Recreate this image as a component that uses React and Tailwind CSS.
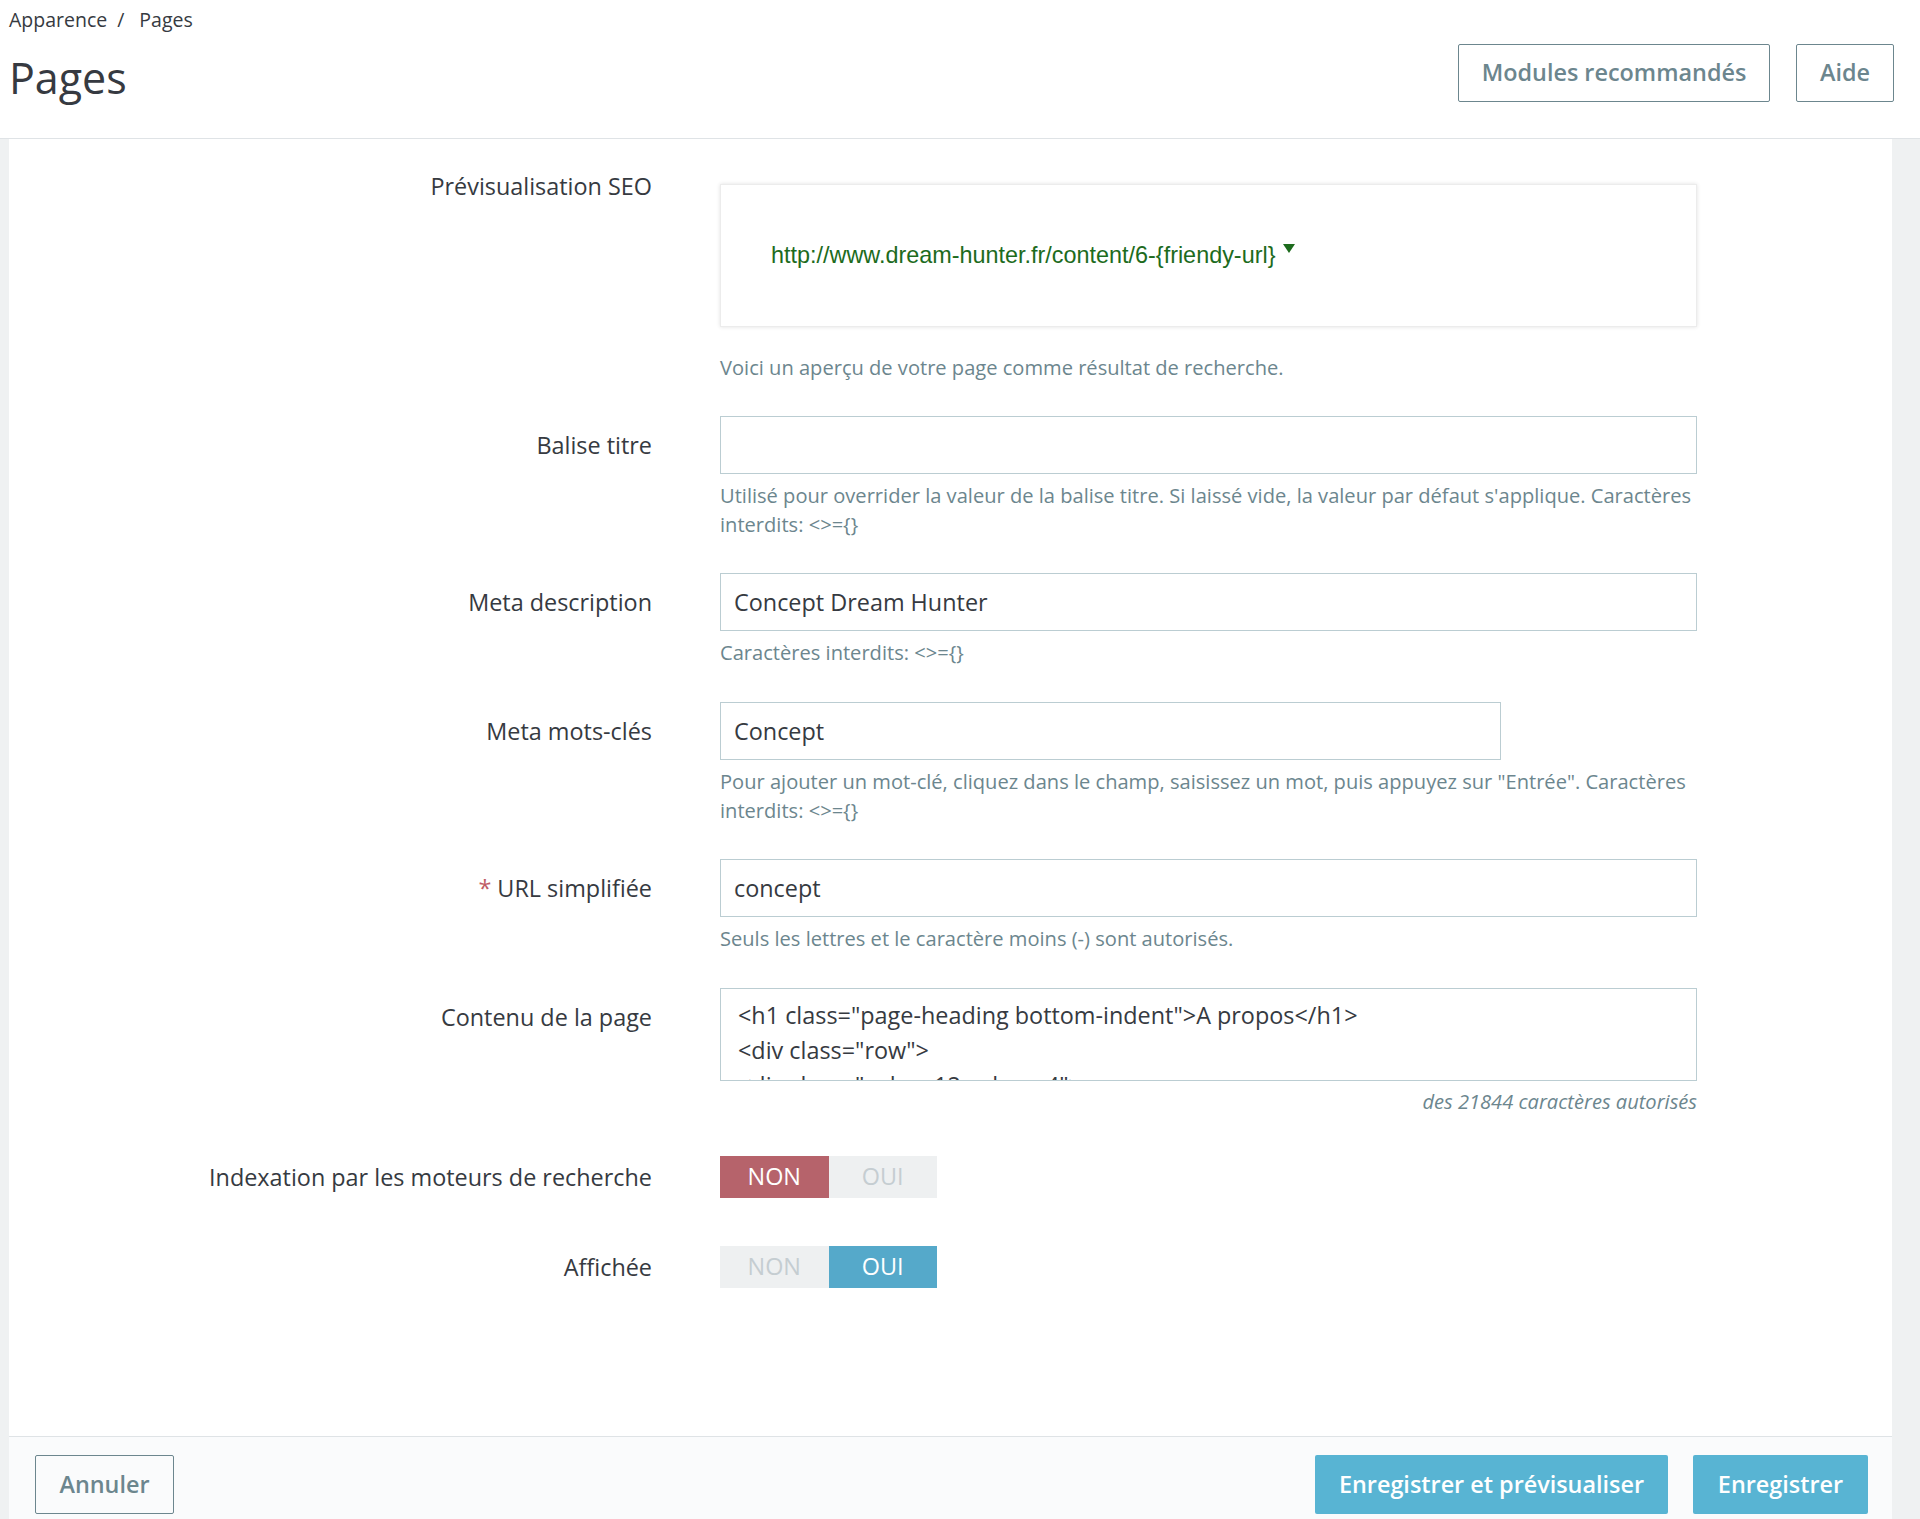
import { useState } from "react"

const Help = ({ children, className = "" }) => (
  <p className={`mt-[7px] text-[20.1px] leading-[29px] text-[#6c868e] ${className}`}>{children}</p>
)

const Row = ({ label, required, children, className = "mb-[34.5px]", labelClass = "leading-[58px]" }) => (
  <div className={`flex ${className}`}>
    <div className={`w-[643px] shrink-0 text-right text-[23.4px] text-[#363a41] ${labelClass}`}>
      {required && <span className="text-[#c05c67] mr-[6px]">*</span>}
      {label}
    </div>
    <div className="ml-[68px] w-[977px]">{children}</div>
  </div>
)

const Toggle = ({ value, onChange }) => (
  <div className="flex h-[58px] items-center">
    <div className="flex h-[42px] w-[217px] text-[23.4px] uppercase">
      <button
        onClick={() => onChange(false)}
        className={`flex-1 flex items-center justify-center ${
          !value ? "bg-[#b6636b] text-white" : "bg-[#eef0f1] text-[#c5cdd1]"
        }`}
      >
        NON
      </button>
      <button
        onClick={() => onChange(true)}
        className={`flex-1 flex items-center justify-center ${
          value ? "bg-[#55a9ca] text-white" : "bg-[#eef0f1] text-[#c5cdd1]"
        }`}
      >
        OUI
      </button>
    </div>
  </div>
)

const App = () => {
  const [indexation, setIndexation] = useState(false)
  const [visible, setVisible] = useState(true)
  const [title, setTitle] = useState("")
  const [description, setDescription] = useState("Concept Dream Hunter")
  const [keywords, setKeywords] = useState("Concept")
  const [slug, setSlug] = useState("concept")

  const inputClass =
    "block w-full h-[58px] px-[13px] border border-[#bbcdd2] bg-white text-[23.4px] text-[#363a41] outline-none"

  return (
    <div className="min-h-[1519px] flex flex-col bg-[#eff1f2] font-['Open_Sans',sans-serif]">
      {/* Header */}
      <div className="h-[139px] shrink-0 bg-white border-b border-[#dfe3e6] pl-[9px] pr-[26px]">
        <div className="pt-[6px] text-[19.5px] leading-[27px] text-[#363a41]">
          <span>Apparence</span>
          <span className="ml-[10px]">/</span>
          <span className="ml-[15px]">Pages</span>
        </div>
        <div className="mt-[11px] flex items-start justify-between">
          <h1 className="mt-[5px] text-[43px] leading-[58px] text-[#363a41]">Pages</h1>
          <div className="flex gap-[26px]">
            <button className="h-[58px] w-[312px] border border-[#6c868e] rounded-[2px] text-[23.4px] font-semibold text-[#6c868e]">
              Modules recommandés
            </button>
            <button className="h-[58px] w-[98px] border border-[#6c868e] rounded-[2px] text-[23.4px] font-semibold text-[#6c868e]">
              Aide
            </button>
          </div>
        </div>
      </div>

      {/* Card */}
      <div className="flex-1 flex flex-col ml-[9px] mr-[28px] bg-white">
        <div className="flex-1 pt-[30px]">
          <Row label="Prévisualisation SEO" labelClass="leading-[34px]" className="mb-[33.5px]">
            <div className="mt-[15px] h-[143px] flex items-center pl-[50px] bg-white border border-[#ececec] shadow-[0_0_4px_rgba(0,0,0,0.12)]">
              <span className="font-['Liberation_Sans',Arial,sans-serif] text-[23.4px] text-[#1d6b1d]">
                {"http://www.dream-hunter.fr/content/6-{friendy-url}"}
              </span>
              <span className="ml-[8px] -mt-[14px] w-0 h-0 border-l-[6px] border-r-[6px] border-t-[9px] border-l-transparent border-r-transparent border-t-[#1d6b1d]"></span>
            </div>
            <p className="mt-[26px] text-[20.1px] leading-[29px] text-[#6c868e]">
              Voici un aperçu de votre page comme résultat de recherche.
            </p>
          </Row>

          <Row label="Balise titre">
            <input className={inputClass} value={title} onChange={(e) => setTitle(e.target.value)} />
            <Help>
              {"Utilisé pour overrider la valeur de la balise titre. Si laissé vide, la valeur par défaut s'applique. Caractères interdits: <>={}"}
            </Help>
          </Row>

          <Row label="Meta description">
            <input className={inputClass} value={description} onChange={(e) => setDescription(e.target.value)} />
            <Help>{"Caractères interdits: <>={}"}</Help>
          </Row>

          <Row label="Meta mots-clés">
            <input
              className={`${inputClass} !w-[781px]`}
              value={keywords}
              onChange={(e) => setKeywords(e.target.value)}
            />
            <Help>
              {'Pour ajouter un mot-clé, cliquez dans le champ, saisissez un mot, puis appuyez sur "Entrée". Caractères interdits: <>={}'}
            </Help>
          </Row>

          <Row label="URL simplifiée" required>
            <input className={inputClass} value={slug} onChange={(e) => setSlug(e.target.value)} />
            <Help>Seuls les lettres et le caractère moins (-) sont autorisés.</Help>
          </Row>

          <Row label="Contenu de la page" className="mb-[32.5px]">
            <div className="h-[93px] overflow-hidden border border-[#bbcdd2] pl-[17px] pt-[9px] text-[23.4px] leading-[35px] text-[#363a41]">
              <div>{'<h1 class="page-heading bottom-indent">A propos</h1>'}</div>
              <div>{'<div class="row">'}</div>
              <div className="h-[12px] overflow-hidden">{'<div class="col-xs-12 col-sm-4">'}</div>
            </div>
            <p className="mt-[6px] text-right italic text-[20.1px] leading-[29px] text-[#6c868e]">
              des 21844 caractères autorisés
            </p>
          </Row>

          <Row label="Indexation par les moteurs de recherche" className="mb-[32px]">
            <Toggle value={indexation} onChange={setIndexation} />
          </Row>

          <Row label="Affichée" className="mb-0">
            <Toggle value={visible} onChange={setVisible} />
          </Row>
        </div>

        {/* Footer */}
        <div className="h-[83px] shrink-0 border-t border-[#dfe3e6] bg-[#fafbfc] pl-[26px] pr-[24px] pt-[18px] flex justify-between items-start">
          <button className="h-[59px] w-[139px] border border-[#6c868e] rounded-[2px] text-[23.4px] font-semibold text-[#6c868e]">
            Annuler
          </button>
          <div className="flex gap-[25px]">
            <button className="h-[59px] w-[353px] rounded-[2px] bg-[#58b4d3] text-[23.4px] font-semibold text-white">
              Enregistrer et prévisualiser
            </button>
            <button className="h-[59px] w-[175px] rounded-[2px] bg-[#58b4d3] text-[23.4px] font-semibold text-white">
              Enregistrer
            </button>
          </div>
        </div>
      </div>
    </div>
  )
}

export default App
